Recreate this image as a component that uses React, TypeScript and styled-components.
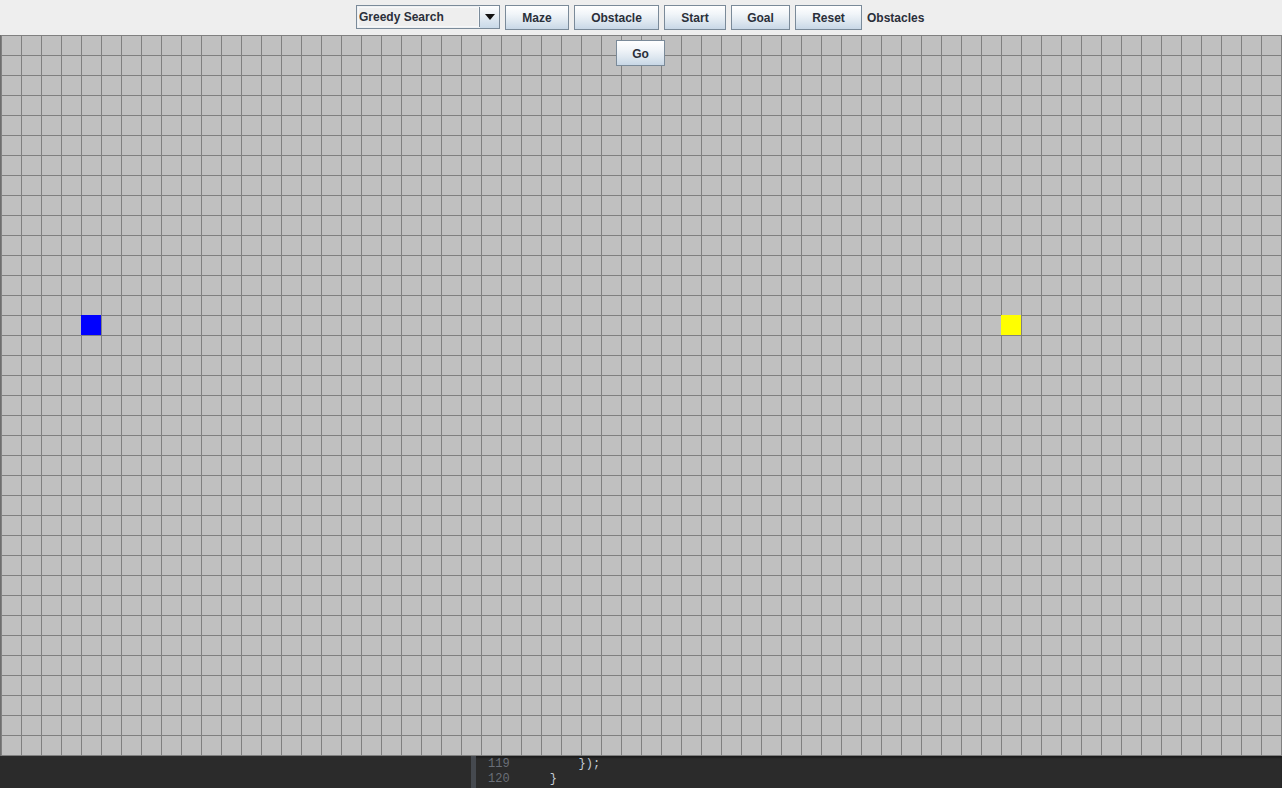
import React from "react";
import styled, { createGlobalStyle } from "styled-components";

const Global = createGlobalStyle`
  html, body { margin: 0; padding: 0; background: #eeeeee; overflow: hidden; }
  #root { width: 1282px; height: 788px; }
`;

const Frame = styled.div`
  width: 1282px;
  height: 788px;
  display: flex;
  flex-direction: column;
  background: #eeeeee;
`;

const Toolbar = styled.div`
  height: 35px;
  display: flex;
  justify-content: flex-start;
  align-items: flex-start;
  gap: 5px;
  padding: 5px 0 0 356px;
  box-sizing: border-box;
  background: #eeeeee;
  font-family: "Liberation Sans", Arial, sans-serif;
  font-weight: bold;
  font-size: 12px;
  color: #2a2f3a;
`;

const Combo = styled.div`
  width: 144px;
  height: 24px;
  box-sizing: border-box;
  display: flex;
  border: 1px solid #7a8a99;
  background: #eef0f2;
`;

const ComboText = styled.div`
  flex: 1;
  display: flex;
  align-items: center;
  padding-left: 1px;
  border-right: 1px solid #7a8a99;
  margin: 1px 0 1px 1px;
  background: #eeeeee;
  box-shadow: inset 0 0 0 1px #f6f7f8;
`;

const ComboArrow = styled.div`
  width: 19px;
  display: flex;
  align-items: center;
  justify-content: center;
  background: linear-gradient(#ffffff, #dde7f0 60%, #c9d9e8);
`;

const Button = styled.div<{ $w: number; $h?: number }>`
  width: ${(p) => p.$w}px;
  height: ${(p) => p.$h ?? 25}px;
  box-sizing: border-box;
  border: 1px solid #7a8a99;
  display: flex;
  align-items: center;
  justify-content: center;
  background: linear-gradient(#ffffff 0%, #f1f5f9 35%, #dce6ef 70%, #c8d7e6 100%);
  font-family: "Liberation Sans", Arial, sans-serif;
  font-weight: bold;
  font-size: 12px;
  color: #2a2f3a;
`;

const Label = styled.div`
  height: 25px;
  display: flex;
  align-items: center;
`;

const Board = styled.div`
  position: relative;
  width: 1281px;
  height: 721px;
  border-left: 1px solid #6e6e6e;
  background-color: #c0c0c0;
  background-image:
    linear-gradient(to right, #808080 1px, transparent 1px),
    linear-gradient(to bottom, #808080 1px, transparent 1px);
  background-size: 20px 20px;
  display: grid;
  grid-template-columns: repeat(64, 20px);
  grid-template-rows: repeat(36, 20px);
`;

const Cell = styled.div<{ $col: number; $row: number; $color: string }>`
  grid-column: ${(p) => p.$col};
  grid-row: ${(p) => p.$row};
  background: ${(p) => p.$color};
`;

const GoButton = styled(Button)`
  position: absolute;
  top: 5px;
  left: 615px;
  padding-top: 1px;
`;

const Editor = styled.div`
  flex: 1;
  display: flex;
  background: #2b2b2b;
  box-shadow: inset 0 2px 2px rgba(0, 0, 0, 0.35);
  font-family: "Liberation Mono", "DejaVu Sans Mono", monospace;
  font-size: 12px;
`;

const EditorSide = styled.div`
  width: 471px;
  background: #2b2b2b;
`;

const Gutter = styled.div`
  width: 5px;
  background: #45494f;
`;

const Lines = styled.div`
  display: flex;
  flex-direction: column;
  padding: 1px 0 0 12px;
`;

const CodeLine = styled.div`
  display: flex;
  height: 15px;
  line-height: 15px;
  white-space: pre;
`;

const LineNo = styled.span`
  width: 33px;
  color: #6a6f78;
`;

const Code = styled.span`
  color: #c4ccd6;
`;

export default function App() {
  return (
    <Frame>
      <Global />
      <Toolbar>
        <Combo>
          <ComboText>Greedy Search</ComboText>
          <ComboArrow>
            <svg width="10" height="6" viewBox="0 0 10 6">
              <path d="M0 0 H10 L5 6 Z" fill="#111" />
            </svg>
          </ComboArrow>
        </Combo>
        <Button $w={64}>Maze</Button>
        <Button $w={85}>Obstacle</Button>
        <Button $w={62}>Start</Button>
        <Button $w={59}>Goal</Button>
        <Button $w={67}>Reset</Button>
        <Label>Obstacles</Label>
      </Toolbar>
      <Board>
        <Cell $col={5} $row={15} $color="#0000ff" />
        <Cell $col={51} $row={15} $color="#ffff00" />
        <GoButton $w={49} $h={26}>Go</GoButton>
      </Board>
      <Editor>
        <EditorSide />
        <Gutter />
        <Lines>
          <CodeLine>
            <LineNo>119</LineNo>
            <Code>{"        });"}</Code>
          </CodeLine>
          <CodeLine>
            <LineNo>120</LineNo>
            <Code>{"    }"}</Code>
          </CodeLine>
        </Lines>
      </Editor>
    </Frame>
  );
}
